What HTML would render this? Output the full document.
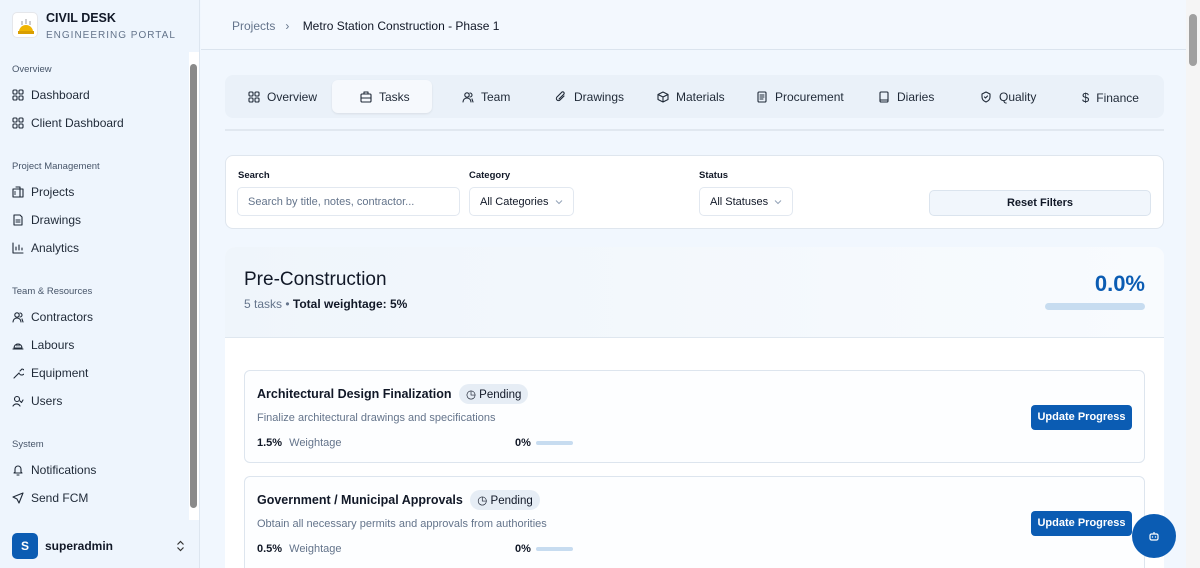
<!DOCTYPE html><html><head><meta charset="utf-8"><style>
*{box-sizing:border-box;margin:0;padding:0}
html,body{width:1200px;height:568px;overflow:hidden}
body{font-family:"Liberation Sans",sans-serif;background:#f1f7fe;position:relative;color:#111827}
.sb{position:absolute;left:0;top:0;width:200px;height:568px;background:#eef5fd;border-right:1px solid #dde6f0}
.logo{position:absolute;left:12px;top:12px;width:26px;height:26px;border-radius:5px;background:#fff;border:1px solid #e5e7eb}
.brand{position:absolute;left:46px;top:11px;font-weight:bold;font-size:12.5px}
.sub{position:absolute;left:46px;top:30px;font-size:10px;letter-spacing:1px;color:#64748b}
.sec{position:absolute;left:12px;font-size:9.5px;color:#475569}
.it{position:absolute;left:12px;font-size:12px;color:#1f2937;display:flex;align-items:center;gap:7px;white-space:nowrap}
svg.i{width:12px;height:12px;stroke:#1f2937;fill:none;stroke-width:1.1;stroke-linecap:round;stroke-linejoin:round}
svg.i *{fill:none}
.ssb{position:absolute;left:189px;top:52px;width:10px;height:468px;background:#fff}
.ssb div{position:absolute;left:1px;top:12px;width:7px;height:444px;background:#8a8a8a;border-radius:4px}
.hdr{position:absolute;left:201px;top:0;width:985px;height:50px;border-bottom:1px solid #dbe4ee;background:#f3f8fe}
.bc{position:absolute;left:31px;top:19px;font-size:12px;color:#64748b}
.bc b{color:#111827;font-weight:normal;margin-left:10px}
.tabs{position:absolute;left:225px;top:75px;width:939px;height:43px;background:#eaf1f9;border-radius:8px}
.tab{position:absolute;top:15px;font-size:12px;color:#1f2937;display:flex;gap:7px;align-items:center;white-space:nowrap}
.tact{position:absolute;left:107px;top:5px;width:100px;height:33px;background:#f6f9fd;border-radius:6px;box-shadow:0 1px 2px rgba(0,0,0,.08)}
.line{position:absolute;left:225px;top:129px;width:939px;height:2px;background:#e1e8f0}
.card{position:absolute;background:#fff;border:1px solid #dfe6ee;border-radius:8px}
.lbl{position:absolute;top:170px;font-size:9.5px;font-weight:bold}
.inp{position:absolute;top:187px;height:29px;border:1px solid #e2e8f0;border-radius:5px;font-size:11px;padding:8px 10px;background:#fff;white-space:nowrap}
.btn{position:absolute;background:#0b5cb3;color:#fff;font-size:11px;font-weight:bold;border-radius:4px;text-align:center;line-height:25px;white-space:nowrap}
.task{position:absolute;left:244px;width:901px;border:1px solid #dde5ee;border-radius:6px;background:#fdfeff}
.tt{position:absolute;left:12px;font-size:12.5px;font-weight:bold;color:#111827;white-space:nowrap}
.pill{display:inline-block;margin-left:4px;background:#e6edf5;border-radius:10px;padding:3px 7px;font-size:11.5px;font-weight:normal}
.ds{position:absolute;left:12px;font-size:11px;color:#64748b}
.wt{position:absolute;left:12px;font-size:11px;color:#64748b}
.wt b{color:#111827;margin-right:4px}
.pc{position:absolute;left:270px;font-size:11px;font-weight:bold;display:flex;align-items:center;gap:5px}
.pc span{display:inline-block;width:37px;height:4px;background:#c7dcf0;border-radius:2px}
</style></head><body>
<div class="sb">
<div class="logo"><svg width="26" height="26"><path d="M6 19a7 7 0 0 1 14 0z" fill="#f0b400"/><rect x="5" y="18" width="16" height="3" fill="#d99e00"/><path d="M9 12v-4M13 11v-5M17 12v-4" stroke="#ccc" stroke-width="2"/></svg></div>
<div class="brand">CIVIL DESK</div><div class="sub">ENGINEERING PORTAL</div>
<div class="sec" style="top:64px">Overview</div>
<div class="it" style="top:88px"><svg class="i" viewBox="0 0 12 12"><rect x="1" y="1" width="4" height="4" rx="1"/><rect x="7" y="1" width="4" height="4" rx="1"/><rect x="1" y="7" width="4" height="4" rx="1"/><rect x="7" y="7" width="4" height="4" rx="1"/></svg>Dashboard</div>
<div class="it" style="top:116px"><svg class="i" viewBox="0 0 12 12"><rect x="1" y="1" width="4" height="4" rx="1"/><rect x="7" y="1" width="4" height="4" rx="1"/><rect x="1" y="7" width="4" height="4" rx="1"/><rect x="7" y="7" width="4" height="4" rx="1"/></svg>Client Dashboard</div>
<div class="sec" style="top:161px">Project Management</div>
<div class="it" style="top:185px"><svg class="i" viewBox="0 0 12 12"><rect x="1" y="3" width="10" height="8"/><path d="M4 1h4v10M2.5 6h1M2.5 8h1"/></svg>Projects</div>
<div class="it" style="top:213px"><svg class="i" viewBox="0 0 12 12"><path d="M2 1h6l2 2v8H2z M4 6h4M4 8h4"/></svg>Drawings</div>
<div class="it" style="top:241px"><svg class="i" viewBox="0 0 12 12"><path d="M1 1v10h10M4 8V5M7 8V3M10 8V6"/></svg>Analytics</div>
<div class="sec" style="top:286px">Team &amp; Resources</div>
<div class="it" style="top:310px"><svg class="i" viewBox="0 0 12 12"><circle cx="5" cy="4" r="2.2"/><path d="M1 11a4 4 0 0 1 8 0M8 2a2 2 0 0 1 0 4M10 8l1 3"/></svg>Contractors</div>
<div class="it" style="top:338px"><svg class="i" viewBox="0 0 12 12"><path d="M2 9a4 4 0 0 1 8 0zM1 10h10M5 5v2M7 5v2"/></svg>Labours</div>
<div class="it" style="top:366px"><svg class="i" viewBox="0 0 12 12"><path d="M2 11l5-5M7 6a3 3 0 1 0 3-4l-2 2"/></svg>Equipment</div>
<div class="it" style="top:394px"><svg class="i" viewBox="0 0 12 12"><circle cx="5" cy="4" r="2.5"/><path d="M1 11a4 4 0 0 1 7 0M8 6l1.5 1.5L11 5"/></svg>Users</div>
<div class="sec" style="top:439px">System</div>
<div class="it" style="top:463px"><svg class="i" viewBox="0 0 12 12"><path d="M3 8V5a3 3 0 0 1 6 0v3l1 1H2zM5 11h2"/></svg>Notifications</div>
<div class="it" style="top:491px"><svg class="i" viewBox="0 0 12 12"><path d="M11 1L1 5l4 2 2 4z"/></svg>Send FCM</div>
<div class="ssb"><div></div></div>
<div style="position:absolute;left:12px;top:533px;width:26px;height:26px;border-radius:5px;background:#0b5cb3;color:#fff;font-weight:bold;font-size:12px;text-align:center;line-height:26px">S</div>
<div style="position:absolute;left:45px;top:539px;font-weight:bold;font-size:12px">superadmin</div>
<svg style="position:absolute;left:176px;top:540px" width="9" height="12" viewBox="0 0 9 12"><path d="M1.5 4.5L4.5 1.5 7.5 4.5M1.5 7.5l3 3 3-3" stroke="#333" fill="none" stroke-width="1.2"/></svg>
</div>
<div class="hdr"><div class="bc">Projects &nbsp; › <b>Metro Station Construction - Phase 1</b></div></div>
<div style="position:absolute;left:1186px;top:0;width:14px;height:568px;background:#f5f5f5"><div style="position:absolute;left:3px;top:14px;width:8px;height:52px;background:#a0a0a0;border-radius:4px"></div></div>
<div class="tabs"><div class="tact"></div>
<div class="tab" style="left:23px"><svg class="i" viewBox="0 0 12 12"><rect x="1" y="1" width="4" height="4" rx="1"/><rect x="7" y="1" width="4" height="4" rx="1"/><rect x="1" y="7" width="4" height="4" rx="1"/><rect x="7" y="7" width="4" height="4" rx="1"/></svg>Overview</div>
<div class="tab" style="left:135px"><svg class="i" viewBox="0 0 12 12"><rect x="1" y="3" width="10" height="8" rx="1"/><path d="M4 3V1h4v2M1 7h10"/></svg>Tasks</div>
<div class="tab" style="left:237px"><svg class="i" viewBox="0 0 12 12"><circle cx="5" cy="4" r="2.2"/><path d="M1 11a4 4 0 0 1 8 0M8 2a2 2 0 0 1 0 4M10 8l1 3"/></svg>Team</div>
<div class="tab" style="left:330px"><svg class="i" viewBox="0 0 12 12"><path d="M9 5L5 9a2 2 0 0 1-3-3l5-5a1.5 1.5 0 0 1 2 2L4 8"/></svg>Drawings</div>
<div class="tab" style="left:432px"><svg class="i" viewBox="0 0 12 12"><path d="M6 1l5 2.5v5L6 11 1 8.5v-5zM1 3.5L6 6l5-2.5M6 6v5"/></svg>Materials</div>
<div class="tab" style="left:531px"><svg class="i" viewBox="0 0 12 12"><rect x="2" y="1" width="8" height="10" rx="1"/><path d="M4 4h4M4 6h4M4 8h3"/></svg>Procurement</div>
<div class="tab" style="left:653px"><svg class="i" viewBox="0 0 12 12"><rect x="2" y="1" width="8" height="10" rx="1"/><path d="M2 9h8"/></svg>Diaries</div>
<div class="tab" style="left:755px"><svg class="i" viewBox="0 0 12 12"><path d="M6 1l4 2v3c0 3-2 4-4 5-2-1-4-2-4-5V3z"/><path d="M4.5 6l1 1 2-2"/></svg>Quality</div>
<div class="tab" style="left:857px"><span style="font-size:13px">$</span>Finance</div>
</div>
<div class="line"></div>
<div class="card" style="left:225px;top:155px;width:939px;height:74px"></div>
<div class="lbl" style="left:238px">Search</div><div class="lbl" style="left:469px">Category</div><div class="lbl" style="left:699px">Status</div>
<div class="inp" style="left:237px;width:223px;color:#64748b">Search by title, notes, contractor...</div>
<div class="inp" style="left:469px;width:105px">All Categories <svg width="8" height="6" viewBox="0 0 8 6" style="margin-left:3px"><path d="M1 1.5l3 3 3-3" stroke="#94a3b8" fill="none"/></svg></div>
<div class="inp" style="left:699px;width:94px">All Statuses <svg width="8" height="6" viewBox="0 0 8 6" style="margin-left:3px"><path d="M1 1.5l3 3 3-3" stroke="#94a3b8" fill="none"/></svg></div>
<div style="position:absolute;left:929px;top:190px;width:222px;height:26px;background:#f1f6fc;border:1px solid #dbe4ee;border-radius:5px;font-size:11px;font-weight:bold;text-align:center;line-height:25px">Reset Filters</div>
<div class="card" style="left:225px;top:247px;width:939px;height:330px;border:none;border-radius:10px;overflow:hidden">
<div style="height:91px;background:linear-gradient(90deg,#eff5fb,#f8fbfe);border-bottom:1px solid #dfe7ef"></div></div>
<div style="position:absolute;left:244px;top:269px;font-size:19px;color:#111827">Pre-Construction</div>
<div style="position:absolute;left:244px;top:297px;font-size:12px;color:#64748b">5 tasks • <b style="color:#111827">Total weightage: 5%</b></div>
<div style="position:absolute;left:1045px;top:271px;width:100px;text-align:right;font-size:22px;font-weight:bold;color:#0b5cb3">0.0%</div>
<div style="position:absolute;left:1045px;top:303px;width:100px;height:7px;background:#c7dcf0;border-radius:4px"></div>
<div class="task" style="top:370px;height:93px">
<div class="tt" style="top:13px">Architectural Design Finalization <span class="pill">◷ Pending</span></div>
<div class="ds" style="top:41px">Finalize architectural drawings and specifications</div>
<div class="wt" style="top:66px"><b>1.5%</b> Weightage</div>
<div class="pc" style="top:66px">0% <span></span></div>
<div class="btn" style="left:786px;top:34px;width:101px">Update Progress</div></div>
<div class="task" style="top:476px;height:100px">
<div class="tt" style="top:13px">Government / Municipal Approvals <span class="pill">◷ Pending</span></div>
<div class="ds" style="top:41px">Obtain all necessary permits and approvals from authorities</div>
<div class="wt" style="top:66px"><b>0.5%</b> Weightage</div>
<div class="pc" style="top:66px">0% <span></span></div>
<div class="btn" style="left:786px;top:34px;width:101px">Update Progress</div></div>
<div style="position:absolute;left:1132px;top:514px;width:44px;height:44px;border-radius:50%;background:#0b5cb3"><svg style="position:absolute;left:16px;top:16px" width="12" height="12" viewBox="0 0 12 12"><rect x="2" y="4" width="8" height="6" rx="1.5" stroke="#fff" fill="none" stroke-width="1.2"/><path d="M6 4V2" stroke="#fff" stroke-width="1.2"/><circle cx="4.5" cy="7" r=".7" fill="#fff"/><circle cx="7.5" cy="7" r=".7" fill="#fff"/></svg></div>
</body></html>
